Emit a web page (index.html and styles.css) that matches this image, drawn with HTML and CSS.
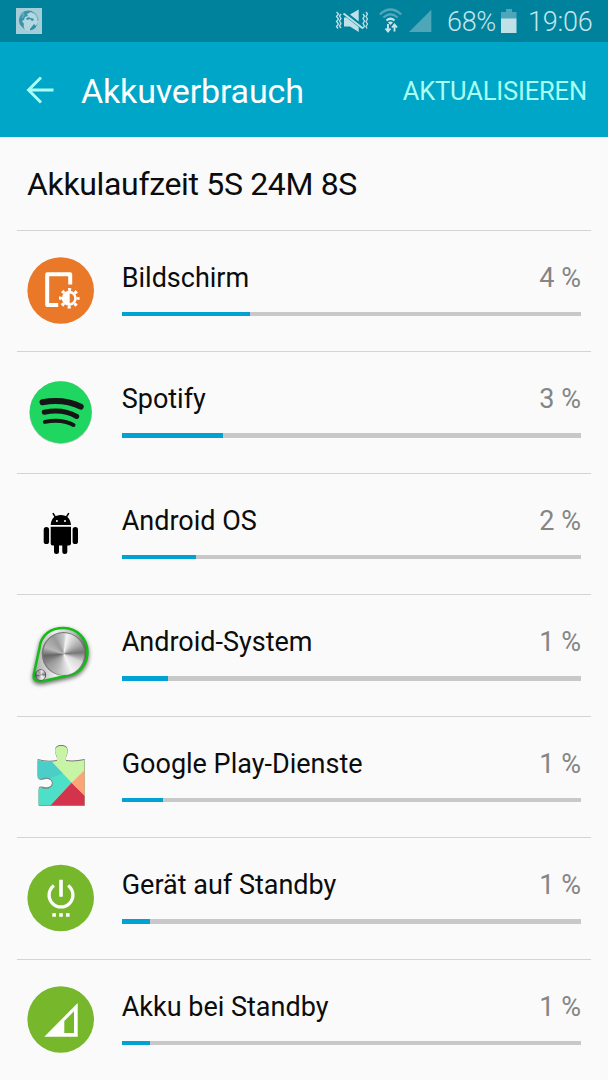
FILE: index.html
```html
<!DOCTYPE html>
<html lang="de">
<head>
<meta charset="utf-8">
<title>Akkuverbrauch</title>
<link rel="stylesheet" href="styles.css">
</head>
<body>
<div class="status">
  <svg class="globe" width="26" height="26" viewBox="0 0 26 26">
    <rect width="26" height="26" fill="#a5cdd8"/>
    <circle cx="12.7" cy="12.7" r="10" fill="#b4d6de"/>
    <path d="M12 2.5Q4 3 3 11Q2.500 16 6 19L9 22Q7 18 8 16L6 13L8 12L9 9L12 8L11 6L15 4L18 6L16 3Z" fill="#3b94aa"/>
    <path d="M14 21L18 16L20 18L22 14Q21 21 14 22.500ZM11 12L14 11L16 13L18 12L17 10.500L14 10L13 9L10 10.500Z" fill="#2f8fa6"/>
    <path d="M4 8L7 5L8 7L6 10M17 4Q22 7 22 13" fill="none" stroke="#6fb0c0" stroke-width="1.2"/>
  </svg>
  <svg class="tray" width="116" height="42" viewBox="334 0 116 42">
    <g fill="none" stroke="#bfe0e7" stroke-width="1.300">
      <path d="M336.500 12l2 2-2 2.500 2 2.500-2 2.500 2 2.500-2 2.500 1.500 2M341 14l-1.500 2 1.500 2.500-1.500 2.500 1.500 2.500-1.500 2.500 1.500 2M366 12l1.500 2-1.500 2.500 1.500 2.500-1.500 2.500 1.500 2.500-1.500 2.500 1 2M363 14l1.500 2-1.500 2.500 1.500 2.500-1.500 2.500 1.500 2.500-1.500 2"/>
    </g>
    <path d="M350 14.500L358.700 9.500V21.500ZM344 17.500h2.500L358.700 27V32L350 26.500H344Z" fill="#bfe0e7"/>
    <path d="M343.500 13.500L363 28.500" stroke="#bfe0e7" stroke-width="2"/>
    <g fill="none" stroke-width="2.200">
      <path d="M379.800 14.500Q390.500 4.500 401.200 14.500M383.300 17.500Q390.500 11 397.700 17.500" stroke="#52a8ba"/>
      <path d="M386.500 20.500Q390.500 17 394.500 20.500" stroke="#c5e5eb"/>
    </g>
    <path d="M388 22.500Q390.500 20.700 393 22.500L390.500 25Z" fill="#c5e5eb"/>
    <path d="M388 24V31M385.500 28.500L388 31.500L390.500 28.500M394.500 31.500V25M392 27.500L394.500 24.500L397 27.500" fill="none" stroke="#c5e5eb" stroke-width="1.900"/>
    <path d="M409 32L431.300 9.700V32Z" fill="#4ea6b9"/>
  </svg>
  <span class="percent">68%</span>
  <svg class="battery" width="16" height="24" viewBox="0 0 16 24">
    <path d="M5 0h6v3h4.500v7H0V3h5Z" fill="#4ea6b9"/><path d="M0 9.500h15.500V24H0Z" fill="#c1e1e8"/>
  </svg>
  <span class="clock">19:06</span>
</div>
<header class="bar">
  <svg class="back" width="28" height="28" viewBox="0 0 28 28"><path d="M15 1.500L2.500 14L15 26.500M2.500 14H27.500" fill="none" stroke="#a9fff2" stroke-width="2.900"/></svg>
  <h1 class="title">Akkuverbrauch</h1>
  <span class="refresh">AKTUALISIEREN</span>
</header>
<main>
  <h2 class="runtime">Akkulaufzeit 5S 24M 8S</h2>
  <ul class="list">
    <li class="item">
      <svg class="icon" viewBox=".3 .5 80 80">
        <circle cx="40" cy="40" r="33.300" fill="#e97829"/>
        <path d="M49.500 34V23.800H26.500V54.500H37.500" fill="none" stroke="#fff" stroke-width="4" stroke-linejoin="round"/>
        <circle cx="48.600" cy="47.800" r="8.800" fill="none" stroke="#fff" stroke-width="3" stroke-dasharray="3.100 3.811" stroke-dashoffset="1.550"/>
        <circle cx="48.600" cy="47.800" r="6.200" fill="none" stroke="#fff" stroke-width="2.600"/>
        <path d="M49 42A5.800 5.800 0 0 0 49 53.600Z" fill="#fff"/>
      </svg>
      <div class="info"><div class="line"><span>Bildschirm</span><span class="value">4 %</span></div><div class="track"><div class="fill" style="width:128.500px"></div></div></div>
    </li>
    <li class="item">
      <svg class="icon" viewBox=".3 0 80 80">
        <circle cx="40" cy="40.600" r="31.400" fill="#b9c6bd"/><circle cx="40" cy="40.200" r="31" fill="#1fd660"/>
        <g fill="none" stroke="#151515" stroke-linecap="round">
          <path d="M21.800 30.300Q43 26.500 60 34.600" stroke-width="6"/>
          <path d="M23.600 40.300Q42 36.500 56 44.500" stroke-width="5"/>
          <path d="M24.200 49.900Q41 46.500 52.800 53" stroke-width="4"/>
        </g>
      </svg>
      <div class="info"><div class="line"><span>Spotify</span><span class="value">3 %</span></div><div class="track"><div class="fill" style="width:101px"></div></div></div>
    </li>
    <li class="item">
      <svg class="icon" viewBox=".3 .4 80 80">
        <path d="M30 31.400C30.500 25 34 21.500 40.100 21.500S49.800 25 50.300 31.400ZM30 33.200H50.300V49.800Q50.300 51.800 48.300 51.800H46.600V58Q46.600 60.500 44.100 60.500T41.600 58V51.800H38.300V58Q38.300 60.500 35.800 60.500T33.300 58V51.800H32Q30 51.800 30 49.800Z"/>
        <rect x="23" y="33.500" width="5.400" height="17" rx="2.700"/><rect x="51.900" y="33.500" width="5.400" height="17" rx="2.700"/>
        <path d="M32.500 20L35 24M47.800 20L45.300 24" stroke="#000" stroke-width="1.600" stroke-linecap="round"/>
        <circle cx="36.200" cy="27.400" r="1" fill="#fff"/><circle cx="44.300" cy="27.400" r="1" fill="#fff"/>
      </svg>
      <div class="info"><div class="line"><span>Android OS</span><span class="value">2 %</span></div><div class="track"><div class="fill" style="width:74px"></div></div></div>
    </li>
    <li class="item">
      <svg class="icon shadow" viewBox=".8 0 80 80">
        <defs>
          <linearGradient id="rim" x1="0" y1="0" x2="1" y2="0"><stop offset="0" stop-color="#aaa"/><stop offset=".4" stop-color="#eee"/><stop offset=".75" stop-color="#bbb"/><stop offset="1" stop-color="#555"/></linearGradient>
        </defs>
        <path d="M19.300 33C21 19 31 13 43.500 13C57 13 67.300 24 67.300 37C67.300 49 59.500 58 50 60L23 66Q12 67.500 13.700 59Z" fill="url(#rim)" stroke="#13bd16" stroke-width="2.500"/>
        <circle cx="43.300" cy="38.800" r="21.800" fill="#777"/>
        <foreignObject x="22.500" y="18" width="41.600" height="41.600"><div class="knob"></div></foreignObject>
        <circle cx="20.300" cy="60" r="5.700" fill="#555"/>
        <foreignObject x="15.700" y="55.400" width="9.200" height="9.200"><div class="knob"></div></foreignObject>
      </svg>
      <div class="info"><div class="line"><span>Android-System</span><span class="value">1 %</span></div><div class="track"><div class="fill" style="width:46px"></div></div></div>
    </li>
    <li class="item">
      <svg class="icon" viewBox=".3 .4 80 80">
        <defs><clipPath id="piece"><path id="outline" d="M17 23.500Q26 26 36 24.500Q37 21.500 35.500 18.500C33 13 35 9.500 40.500 9.500S48.500 13 46 18.500Q44.500 21.500 45.500 24.500Q54 25.500 64 23.500V68.800H18V53Q18 50.500 21 51C27 53 31.600 51 31.600 46.500S27 40.500 21 42.500Q18 43 17 40.500Z"/></clipPath></defs>
        <use href="#outline" fill="#777" transform="translate(0 -1)"/><use href="#outline" fill="#777" transform="translate(0 .7)"/>
        <g clip-path="url(#piece)">
          <path d="M10 0H70V80H10Z" fill="#c8f5a5"/>
          <path d="M10 20L29 23L51 46.200L28.600 70H10Z" fill="#4ddfc8"/>
          <path d="M10 20L29 23L42 36.700Q29 43 10 45Z" fill="#4bc8c8" opacity=".75"/>
          <path d="M51 46.200L28.600 70H70V65Z" fill="#d3344c"/>
          <path d="M51 46.200L65 32.500V60Z" fill="#fba477"/>
        </g>
        <path d="M21 51C27 53 31.600 51 31.600 46.500S27 40.500 21 42.500" fill="none" stroke="#777" stroke-width=".8"/>
      </svg>
      <div class="info"><div class="line"><span>Google Play-Dienste</span><span class="value">1 %</span></div><div class="track"><div class="fill" style="width:41.500px"></div></div></div>
    </li>
    <li class="item">
      <svg class="icon" viewBox=".3 0 80 80">
        <circle cx="40" cy="40" r="33.300" fill="#76b72b"/>
        <path d="M33.200 27.500A11.900 11.900 0 1 0 47.400 27.500" fill="none" stroke="#fff" stroke-width="3.300"/>
        <path d="M38.500 21.700h3.600v17h-3.600ZM31.600 55.200h3.600v3.600h-3.600ZM38.500 55.200h3.600v3.600h-3.600ZM45.300 55.200h3.600v3.600h-3.600Z" fill="#fff"/>
      </svg>
      <div class="info"><div class="line"><span>Gerät auf Standby</span><span class="value">1 %</span></div><div class="track"><div class="fill" style="width:28px"></div></div></div>
    </li>
    <li class="item">
      <svg class="icon" viewBox=".3 .5 80 80">
        <circle cx="40" cy="40" r="33.300" fill="#76b72b"/>
        <path fill-rule="evenodd" d="M23.600 57.300L57 23.500V57.300ZM43.600 41.500V53.500H53.300V31.800Z" fill="#fff"/>
      </svg>
      <div class="info"><div class="line"><span>Akku bei Standby</span><span class="value">1 %</span></div><div class="track"><div class="fill" style="width:28px"></div></div></div>
    </li>
  </ul>
</main>
</body>
</html>
```
FILE: styles.css
```css
* { box-sizing: border-box; }
body {
  margin: 0;
  height: 1080px;
  overflow: hidden;
  background: #fafafa;
  color: #0c0c0c;
  font-family: Roboto, "Noto Sans", sans-serif;
}
.status {
  display: flex;
  align-items: center;
  height: 42px;
  padding: 0 15px 0 16px;
  background: #00829c;
  color: #c5e5eb;
  font-size: 27px;
  font-weight: 300;
  line-height: 42px;
}
.tray { margin-left: auto; flex: none; }
.globe, .battery, .back { flex: none; }
.percent { width: 48px; margin: 2px 0 0 -3px; letter-spacing: -.3px; white-space: nowrap; }
.battery { margin: 0 11px 0 6px; }
.clock { width: 65px; margin-top: 2px; letter-spacing: -.2px; white-space: nowrap; }
.bar {
  display: flex;
  align-items: center;
  height: 94.500px;
  padding: 0 21px 0 26px;
  background: #00a6c7;
}
.back { margin-top: 1px; }
.title {
  margin: 3px 0 0 27px;
  color: #fff;
  font-size: 34px;
  font-weight: 400;
  line-height: 40px;
  letter-spacing: -.17px;
}
.refresh {
  margin: 3px 0 0 auto;
  color: #a9fff2;
  font-size: 25.500px;
  letter-spacing: -.16px;
}
.runtime {
  height: 93px;
  margin: 0;
  padding-left: 27px;
  font-size: 32px;
  font-weight: 400;
  line-height: 95px;
  letter-spacing: -.34px;
}
.list { margin: 0; padding: 0 17px; list-style: none; }
.item {
  display: flex;
  height: 121.500px;
  padding: 21px 10px 0 3.700px;
  border-top: 1px solid #d4d4d4;
}
.icon { flex: none; width: 80px; height: 80px; margin-top: -1px; overflow: visible; }
.shadow { filter: drop-shadow(0 2px 2px rgba(0, 0, 0, .6)); }
.knob {
  width: 100%;
  height: 100%;
  border-radius: 50%;
  background: conic-gradient(#c8c8c8, #f4f4f4 10deg, #a8a8a8 60deg, #777 85deg, #d8d8d8 115deg, #f4f4f4 155deg, #bbb 200deg, #999 235deg, #666 265deg, #b8b8b8 290deg, #999 330deg, #c8c8c8);
}
.info { flex: 1; padding-left: 21px; }
.line {
  display: flex;
  justify-content: space-between;
  height: 60px;
  font-size: 27px;
  line-height: 52px;
}
.value { color: #858585; }
.track { height: 4.500px; background: #c8c8c8; }
.fill { height: 100%; background: #00a2d3; }
```
